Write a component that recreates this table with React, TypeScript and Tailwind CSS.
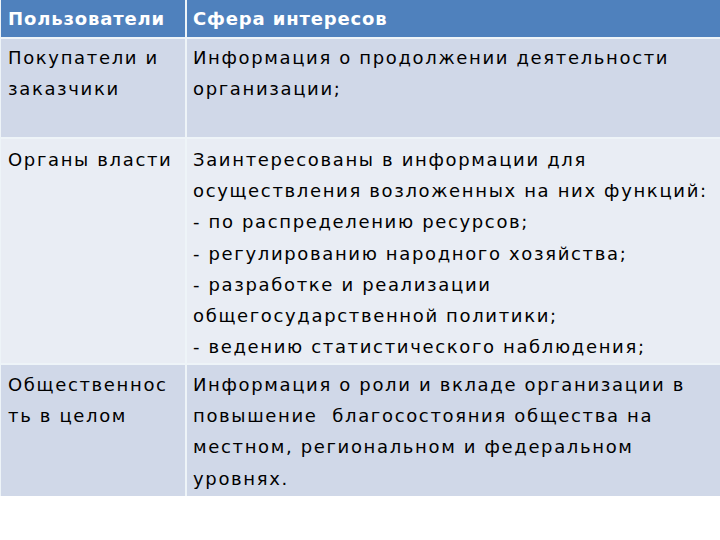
import React from "react";

const font = { fontFamily: '"DejaVu Sans", "Open Sans", sans-serif' };

function Lines({ lines }: { lines: string[] }) {
  return (
    <>
      {lines.map((l, i) => (
        <div key={i} className="whitespace-pre">
          {l}
        </div>
      ))}
    </>
  );
}

export default function App() {
  return (
    <div className="w-[720px] h-[540px] bg-white" style={font}>
      <div className="grid grid-cols-[184px_1fr] grid-rows-[37px_98px_224px_131px] gap-[2px] bg-[#eef4f8] text-[18px] leading-[31.2px] tracking-[1.65px] text-black pl-[1px]">
        <div className="bg-[#4f81bd] text-white font-bold tracking-[0.85px] pl-[7px] pt-[3px]">Пользователи</div>
        <div className="bg-[#4f81bd] text-white font-bold tracking-[0.85px] pl-[6px] pt-[3px]">Сфера интересов</div>

        <div className="bg-[#d0d8e8] pl-[7px] pt-[3px]">
          <Lines lines={["Покупатели и", "заказчики"]} />
        </div>
        <div className="bg-[#d0d8e8] pl-[6px] pt-[3px]">
          <Lines lines={["Информация о продолжении деятельности", "организации;"]} />
        </div>

        <div className="bg-[#e9edf4] pl-[7px] pt-[5px]">
          <Lines lines={["Органы власти"]} />
        </div>
        <div className="bg-[#e9edf4] pl-[6px] pt-[5px]">
          <Lines
            lines={[
              "Заинтересованы в информации для",
              "осуществления возложенных на них функций:",
              "- по распределению ресурсов;",
              "- регулированию народного хозяйства;",
              "- разработке и реализации",
              "общегосударственной политики;",
              "- ведению статистического наблюдения;",
            ]}
          />
        </div>

        <div className="bg-[#d0d8e8] pl-[7px] pt-[4px]">
          <Lines lines={["Общественнос", "ть в целом"]} />
        </div>
        <div className="bg-[#d0d8e8] pl-[6px] pt-[4px]">
          <Lines
            lines={[
              "Информация о роли и вкладе организации в",
              "повышение  благосостояния общества на",
              "местном, региональном и федеральном",
              "уровнях.",
            ]}
          />
        </div>
      </div>
    </div>
  );
}
